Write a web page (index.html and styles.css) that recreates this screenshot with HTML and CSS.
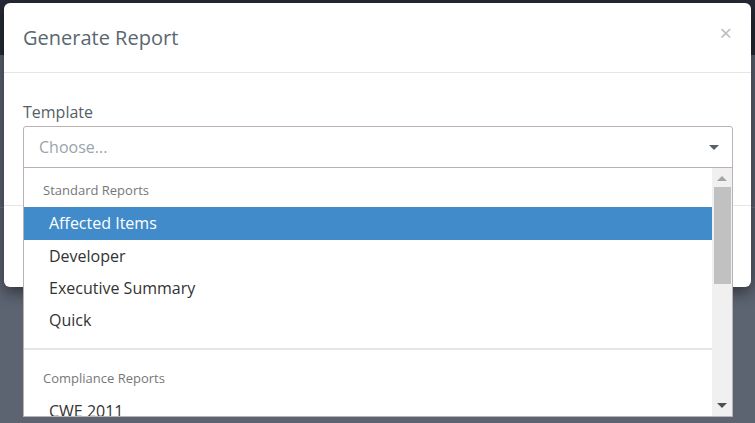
FILE: index.html
```html
<!DOCTYPE html>
<html lang="en">
<head>
    <meta charset="UTF-8">
    <meta name="viewport" content="width=device-width, initial-scale=1.0">
    <title>Generate Report</title>
    <link rel="stylesheet" href="styles.css">
</head>
<body>
    <div class="page">
        <div class="navbar"></div>
        <div class="page-body">
            <div class="page-rule"></div>
        </div>
    </div>

    <div class="modal">
        <div class="modal-header">
            <h4 class="modal-title">Generate Report</h4>
            <span class="close">&times;</span>
        </div>
        <div class="modal-body">
            <label class="field-label">Template</label>
            <div class="select">
                <span class="placeholder">Choose...</span>
                <span class="caret"></span>
                <div class="dropdown">
                    <div class="options">
                        <div class="group-label">Standard Reports</div>
                        <div class="option selected">Affected Items</div>
                        <div class="option">Developer</div>
                        <div class="option">Executive Summary</div>
                        <div class="option">Quick</div>
                        <div class="divider"></div>
                        <div class="group-label">Compliance Reports</div>
                        <div class="option">CWE 2011</div>
                    </div>
                    <div class="scrollbar">
                        <span class="arrow-up"></span>
                        <div class="track">
                            <div class="thumb"></div>
                        </div>
                        <span class="arrow-down"></span>
                    </div>
                </div>
            </div>
        </div>
        <div class="modal-footer"></div>
    </div>
</body>
</html>
```

FILE: styles.css
```css
body {
    margin: 0;
    font-family: "Open Sans", Arial, sans-serif;
    background: #5c6371;
    height: 423px;
    overflow: hidden;
}

.page {
    display: flex;
    flex-direction: column;
    height: 423px;
}

.navbar {
    height: 55px;
    background: #252a35;
}

.page-body {
    flex: 1;
    padding-top: 152px;
}

.page-rule {
    height: 1px;
    background: #6e7380;
}

/* dialog */
.modal {
    position: absolute;
    top: 3px;
    left: 4px;
    width: 747px;
    height: 284px;
    background: #fff;
    border-radius: 6px;
    box-shadow: 0 5px 15px rgba(0, 0, 0, 0.5);
    display: flex;
    flex-direction: column;
}

.modal-header {
    height: 70px;
    border-bottom: 1px solid #e5e5e5;
    display: flex;
    align-items: center;
    justify-content: space-between;
    padding: 0 19px 0 19px;
    box-sizing: border-box;
}

.modal-title {
    margin: 0;
    font-size: 20px;
    font-weight: normal;
    color: #5a6770;
}

.close {
    font-size: 22px;
    color: #bbb;
    line-height: 1;
    margin-top: -11px;
}

.modal-body {
    height: 132px;
    padding: 28px 18px 0 19px;
    box-sizing: border-box;
}

.field-label {
    display: block;
    font-size: 16px;
    color: #555f68;
    line-height: 22px;
    margin-bottom: 3px;
}

.select {
    position: relative;
    height: 41px;
    border: 1px solid #bcb2b4;
    border-radius: 3px 3px 0 0;
    display: flex;
    align-items: center;
    justify-content: space-between;
    padding: 0 13px 0 15px;
}

.placeholder {
    font-size: 16px;
    color: #9aa4aa;
    margin-top: -1px;
}

.caret {
    width: 0;
    height: 0;
    border-left: 5px solid transparent;
    border-right: 5px solid transparent;
    border-top: 5px solid #56606a;
}

.dropdown {
    position: absolute;
    top: 40px;
    left: -1px;
    right: -1px;
    height: 248px;
    background: #fff;
    border: 1px solid #bcb2b4;
    display: flex;
    overflow: hidden;
}

.options {
    flex: 1;
    padding-top: 6px;
}

.group-label {
    font-size: 13px;
    color: #777;
    padding: 0 0 0 19px;
    line-height: 33px;
}

.option {
    font-size: 16px;
    color: #333;
    padding-left: 25px;
    line-height: 32px;
}

.option.selected {
    background: #418bca;
    color: #fff;
    line-height: 33px;
}

.divider {
    height: 2px;
    background: #e5e5e5;
    margin: 12px 0 12px 0;
}

.scrollbar {
    width: 20px;
    background: #f0f0f0;
    display: flex;
    flex-direction: column;
    align-items: center;
}

.arrow-up {
    margin: 8px 0 6px;
    border-left: 5px solid transparent;
    border-right: 5px solid transparent;
    border-bottom: 5px solid #a3a3a3;
}

.track {
    flex: 1;
    align-self: stretch;
    padding: 0 1px 0 2px;
}

.thumb {
    height: 97px;
    background: #c1c1c1;
}

.arrow-down {
    margin: 6px 0 8px;
    border-left: 5px solid transparent;
    border-right: 5px solid transparent;
    border-top: 5px solid #505050;
}

.modal-footer {
    flex: 1;
    border-top: 1px solid #e5e5e5;
}
```
